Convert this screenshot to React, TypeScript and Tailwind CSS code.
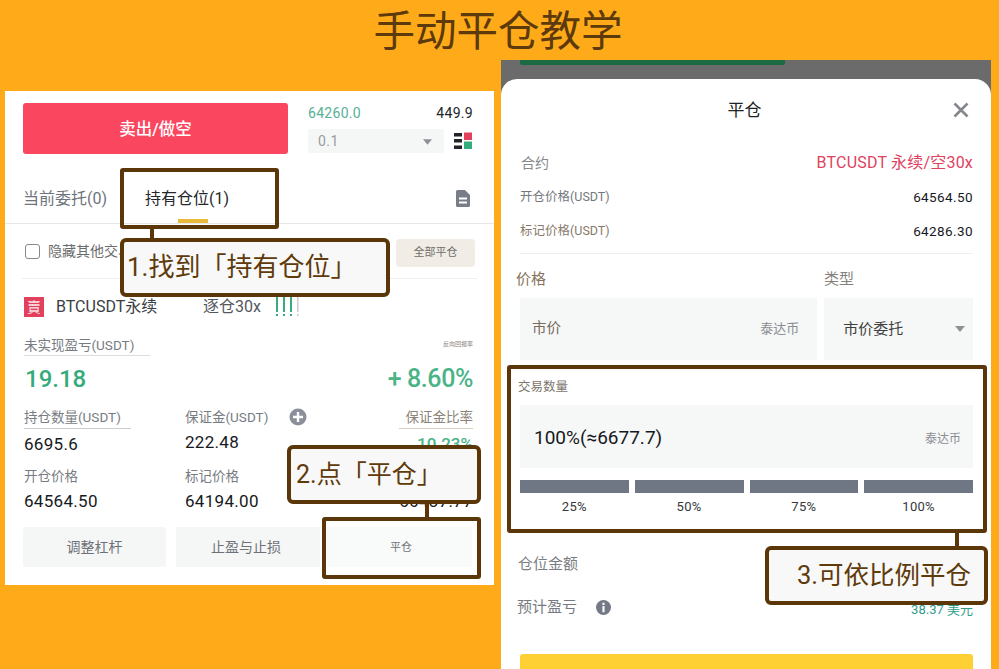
const brown = "border-[#5a3608]";

function Caret({ className }: { className: string }) {
  return (
    <svg viewBox="0 0 10 6" className={className}>
      <path d="M0 0h10L5 6z" fill="currentColor" />
    </svg>
  );
}

function Stat({ label, value, underline }: { label: string; value: string; underline?: string }) {
  return (
    <div className="flex flex-col">
      <span className="text-[13.5px] leading-[20px] text-[#777c82]">{label}</span>
      {underline && <div className={`mt-[1px] h-px bg-[#c9cbcd] ${underline}`} />}
      <span className="mt-[4px] text-[17px] leading-[22px] tracking-[0.3px] text-[#16191d]">{value}</span>
    </div>
  );
}

function Callout({ className, children }: { className: string; children: React.ReactNode }) {
  return (
    <div className={`absolute flex items-center rounded-[6px] border-[4px] ${brown} bg-[#f7f8f7] text-[#5f3a0b] ${className}`}>
      {children}
    </div>
  );
}

function PositionPanel() {
  return (
    <section className="relative mt-[31px] ml-[5px] h-[494px] w-[489px] shrink-0 bg-white">
      <div className="h-[74px] overflow-hidden">
        <div className="flex pl-[18px]">
          <button className="mt-[12px] flex h-[51px] w-[265px] items-center justify-center rounded-[3px] bg-[#fb4660] pt-[3px] text-[16.5px] font-medium text-white">
            卖出/做空
          </button>
          <div className="ml-[20px] w-[165px]">
            <div className="flex h-[3px] items-end justify-between overflow-hidden text-[13px] leading-[14px] text-[#a5a8ab]">
              <span>64300.0</span>
              <span className="text-[#55585c]">447.9</span>
            </div>
            <div className="mt-[9px] flex h-[20px] items-center justify-between text-[14px] tracking-[0.3px]">
              <span className="text-[#56b096]">64260.0</span>
              <span className="text-[#22262a]">449.9</span>
            </div>
            <div className="mt-[6px] flex items-center justify-between">
              <div className="flex h-[24px] w-[136px] items-center justify-between rounded-[3px] bg-[#f5f6f6] pt-[1px] pl-[10px] pr-[12px] text-[14px] tracking-[0.5px] text-[#989ca0]">
                <span>0.1</span>
                <Caret className="h-[6px] w-[9px] text-[#8d9196]" />
              </div>
              <svg viewBox="0 0 18 18" className="mr-[1px] h-[18px] w-[18px]">
                <path d="M0 1h8v3.500H0zM0 7h8v3.500H0zM0 13.500h8V17H0z" fill="#20232a" />
                <path d="M10 0.500h8v7.500h-8z" fill="#e2405c" />
                <path d="M10 9.500h8V17h-8z" fill="#35ad7d" />
              </svg>
            </div>
          </div>
        </div>
      </div>

      <div className="relative flex h-[59px] items-center border-b border-[#e6e7e8] pt-[9px] pl-[18px] pr-[24px] text-[16px]">
        <span className="text-[#6e747b]">当前委托(0)</span>
        <span className="ml-[38px] text-[#24272b]">持有仓位(1)</span>
        <svg viewBox="0 0 14 17" className="ml-auto h-[17px] w-[14px]">
          <path d="M0 1.500A1.500 1.500 0 0 1 1.500 0H9l5 5v10.500a1.500 1.500 0 0 1-1.500 1.500h-11A1.500 1.500 0 0 1 0 15.500z" fill="#777e88" />
          <path d="M3 7.500h8v2H3zM3 11.500h8v2H3z" fill="#fff" />
        </svg>
        <div className="absolute bottom-0 left-[173px] h-[4px] w-[30px] bg-[#e8b93c]" />
      </div>

      <div className="mx-[17px] flex h-[55px] items-center justify-between border-b border-[#eeeeef] text-[14px]">
        <div className="flex items-center text-[#6b6c6e]">
          <span className="ml-[3px] h-[15px] w-[15px] rounded-[3px] border border-[#85888c]" />
          <span className="ml-[8px]">隐藏其他交易对</span>
        </div>
        <button className="mt-[4px] mr-[2px] flex h-[28px] w-[79px] items-center justify-center rounded-[4px] bg-[#f1ece6] text-[11px] text-[#6e6c69]">
          全部平仓
        </button>
      </div>

      <div className="flex h-[56px] items-center pl-[19px] text-[#3a3d44]">
        <span className="flex h-[20px] w-[20px] items-center justify-center bg-[#e2405c] text-[14px] leading-none text-[#f9dfe3]">賣</span>
        <span className="ml-[12px] w-[147px] text-[16px]">BTCUSDT永续</span>
        <span className="text-[16px] text-[#55585e]">逐仓30x</span>
        <svg viewBox="0 0 24 22" className="ml-[14px] h-[22px] w-[24px]">
          <path d="M1 1h2v15H1zM8 1h2v15H8zM15 1h2v15h-2z" fill="#35ad7d" />
          <path d="M22 1h1.500v15H22z" fill="#c9cbcd" />
          <path d="M1 18h2v2H1zM8 18h2v2H8zM15 18h2v2h-2z" fill="#35ad7d" />
          <path d="M22 18h1.500v2H22z" fill="#c9cbcd" />
        </svg>
      </div>

      <div className="pl-[19px] pr-[21px]">
        <div className="flex items-start justify-between">
          <div>
            <span className="block text-[13.5px] leading-[20px] text-[#777c82]">未实现盈亏(USDT)</span>
            <div className="h-px w-[126px] bg-[#dcdddf]" />
          </div>
          <span className="mt-[5px] text-[6px] leading-[8px] text-[#8a8480]">反向回报率</span>
        </div>
        <div className="mt-[5px] flex h-[36px] items-center justify-between font-medium text-[#35ab7c]">
          <span className="ml-[1px] text-[24px]">19.18</span>
          <span className="text-[25px] tracking-[-0.4px] text-[#4ab487]">+ 8.60%</span>
        </div>
        <div className="mt-[10px] grid grid-cols-[161px_1fr_auto]">
          <Stat label="持仓数量(USDT)" value="6695.6" underline="w-[107px]" />
          <div className="relative">
            <Stat label="保证金(USDT)" value="222.48" />
            <svg viewBox="0 0 18 18" className="absolute top-[1px] left-[104px] h-[18px] w-[18px]">
              <circle cx="9" cy="9" r="8.500" fill="#8b8f99" />
              <path d="M4 7.800h10v2.400H4zM7.800 4h2.400v10H7.800z" fill="#fff" />
            </svg>
          </div>
          <div className="flex flex-col items-end">
            <span className="text-[13.5px] leading-[20px] text-[#8c8478]">保证金比率</span>
            <div className="mt-[1px] h-px w-[74px] bg-[#d9cfc2]" />
            <span className="mt-[4px] text-[17px] leading-[22px] font-medium text-[#4ab487]">10.23%</span>
          </div>
        </div>
        <div className="mt-[11px] grid grid-cols-[161px_1fr_auto]">
          <Stat label="开仓价格" value="64564.50" />
          <Stat label="标记价格" value="64194.00" />
          <div className="mt-[24px] text-[17px] leading-[22px] tracking-[0.3px] text-[#16191d]">66437.77</div>
        </div>
      </div>

      <div className="mt-[15px] flex pl-[18px] pr-[22px] text-[14px] text-[#6e7278]">
        <button className="h-[40px] w-[143px] rounded-[2px] bg-[#f5f6f6]">调整杠杆</button>
        <button className="ml-[10px] h-[40px] w-[144px] rounded-[2px] bg-[#f5f6f6] pr-[4px]">止盈与止损</button>
        <button className="ml-[6px] h-[40px] w-[146px] rounded-[2px] bg-[#f9fafa] pt-[3px] pl-[4px] text-[11px]">平仓</button>
      </div>

      {/* annotations */}
      <div className={`absolute top-[77px] left-[115px] h-[61px] w-[159px] rounded-[3px] border-[4px] ${brown}`} />
      <div className="absolute top-[138px] left-[145px] h-[9px] w-[4px] bg-[#5a3608]" />
      <Callout className="top-[147px] left-[115px] h-[59px] w-[270px] pl-[3px] text-[26px]">1.找到「持有仓位」</Callout>
      <Callout className="top-[354px] left-[282px] h-[59px] w-[194px] pl-[5px] text-[25px]">2.点「平仓」</Callout>
      <div className="absolute top-[413px] left-[420px] h-[13px] w-[4px] bg-[#5a3608]" />
      <div className={`absolute top-[426px] left-[317px] h-[62px] w-[159px] rounded-[3px] border-[4px] ${brown}`} />
    </section>
  );
}

function ClosePanel() {
  return (
    <section className="relative ml-[7px] h-[609px] w-[490px] shrink-0 bg-[#6b6b6b]">
      <div className="ml-[19px] h-[5px] w-[265px] rounded-b-[2px] bg-[#1b6a41]" />
      <div className="mt-[14px] h-[590px] rounded-t-[16px] bg-white pl-[19px] pr-[18px]">
        <div className="relative flex h-[63px] items-center justify-center pr-[4px] text-[17px] text-[#1e2125]">
          平仓
          <svg viewBox="0 0 16 16" className="absolute top-[23px] right-[4px] h-[16px] w-[16px]">
            <path d="M1.500 1.500l13 13M14.500 1.500l-13 13" stroke="#84878c" strokeWidth="2.600" />
          </svg>
        </div>
        <div className="flex h-[41px] items-center justify-between">
          <span className="mt-[2px] ml-[1px] text-[14px] text-[#85888c]">合约</span>
          <span className="text-[16px] tracking-[0.2px] text-[#e0415e]">BTCUSDT 永续/空30x</span>
        </div>
        <div className="-mt-[2px] flex h-[33px] items-center justify-between text-[12.5px]">
          <span className="text-[#74787d]">开仓价格(USDT)</span>
          <span className="text-[13.5px] tracking-[0.4px] text-[#16191d]">64564.50</span>
        </div>
        <div className="flex h-[34px] items-center justify-between text-[12.5px]">
          <span className="text-[#87796a]">标记价格(USDT)</span>
          <span className="text-[13.5px] tracking-[0.4px] text-[#16191d]">64286.30</span>
        </div>
        <div className="mt-[5px] h-px bg-[#eeeeee]" />
        <div className="flex h-[44px] items-center pt-[6px] text-[15px]">
          <span className="-ml-[4px] w-[308px] text-[#84735c]">价格</span>
          <span className="text-[#85817c]">类型</span>
        </div>
        <div className="flex h-[62px] gap-[7px]">
          <div className="flex w-[298px] items-center justify-between bg-[#f6f7f7] pl-[12px] pr-[18px]">
            <span className="text-[14.5px] text-[#776a5c]">市价</span>
            <span className="text-[13px] text-[#8a8d92]">泰达币</span>
          </div>
          <div className="flex w-[149px] items-center justify-between bg-[#f6f7f7] pl-[19px] pr-[8px]">
            <span className="text-[15px] text-[#3e3f42]">市价委托</span>
            <Caret className="h-[6px] w-[10px] text-[#8d9196]" />
          </div>
        </div>

        <div className="mt-[17px] flex h-[20px] items-center text-[12.5px] text-[#7d766d]">
          <span className="-ml-[2px]">交易数量</span>
        </div>
        <div className="mt-[8px] flex h-[63px] items-center justify-between bg-[#f6f7f7] pt-[4px] pl-[14px] pr-[12px]">
          <span className="text-[19px] text-[#16191d]">100%(≈6677.7)</span>
          <span className="text-[12px] text-[#8a8d92]">泰达币</span>
        </div>
        <div className="mt-[12px] grid grid-cols-4 gap-x-[6px] text-center text-[13px] leading-[20px] tracking-[0.3px] text-[#35383c]">
          {["25%", "50%", "75%", "100%"].map((pct) => (
            <div key={pct}>
              <div className="h-[13px] bg-[#6f7785]" />
              <div className="mt-[4px]">{pct}</div>
            </div>
          ))}
        </div>

        <div className="mt-[34px] flex h-[26px] items-center text-[15px] text-[#7a7e83]">
          <span className="-ml-[2px]">仓位金额</span>
        </div>
        <div className="mt-[17px] flex h-[26px] items-center justify-between">
          <div className="-ml-[3px] flex items-center">
            <span className="text-[15px] text-[#777b80]">预计盈亏</span>
            <svg viewBox="0 0 16 16" className="ml-[19px] h-[15px] w-[15px]">
              <circle cx="8" cy="8" r="8" fill="#737a86" />
              <path d="M6.900 3h2.200v2.200H6.900zM6.900 6.500h2.200V13H6.900z" fill="#fff" />
            </svg>
          </div>
          <span className="mt-[5px] text-[13px] text-[#2f9c8a]">38.37 美元</span>
        </div>
        <div className="mt-[34px] h-[40px] rounded-t-[3px] bg-[#ffd033]" />
      </div>

      {/* annotations */}
      <div className={`absolute top-[305px] left-[6px] h-[168px] w-[480px] rounded-[3px] border-[4.500px] ${brown}`} />
      <div className="absolute top-[473px] left-[454px] h-[13px] w-[4px] bg-[#5a3608]" />
      <Callout className="top-[486px] left-[264px] h-[59px] w-[223px] pl-[28px] text-[25.500px]">3.可依比例平仓</Callout>
    </section>
  );
}

export default function App() {
  return (
    <div className="h-[669px] w-[999px] overflow-hidden bg-[#ffab19] font-[Roboto,'Noto_Sans_CJK_SC',sans-serif]">
      <h1 className="flex h-[60px] items-center justify-center pt-[5px] pr-[3px] text-[41.500px] font-normal text-[#5c3a0c]">手动平仓教学</h1>
      <div className="flex items-start">
        <PositionPanel />
        <ClosePanel />
      </div>
    </div>
  );
}
